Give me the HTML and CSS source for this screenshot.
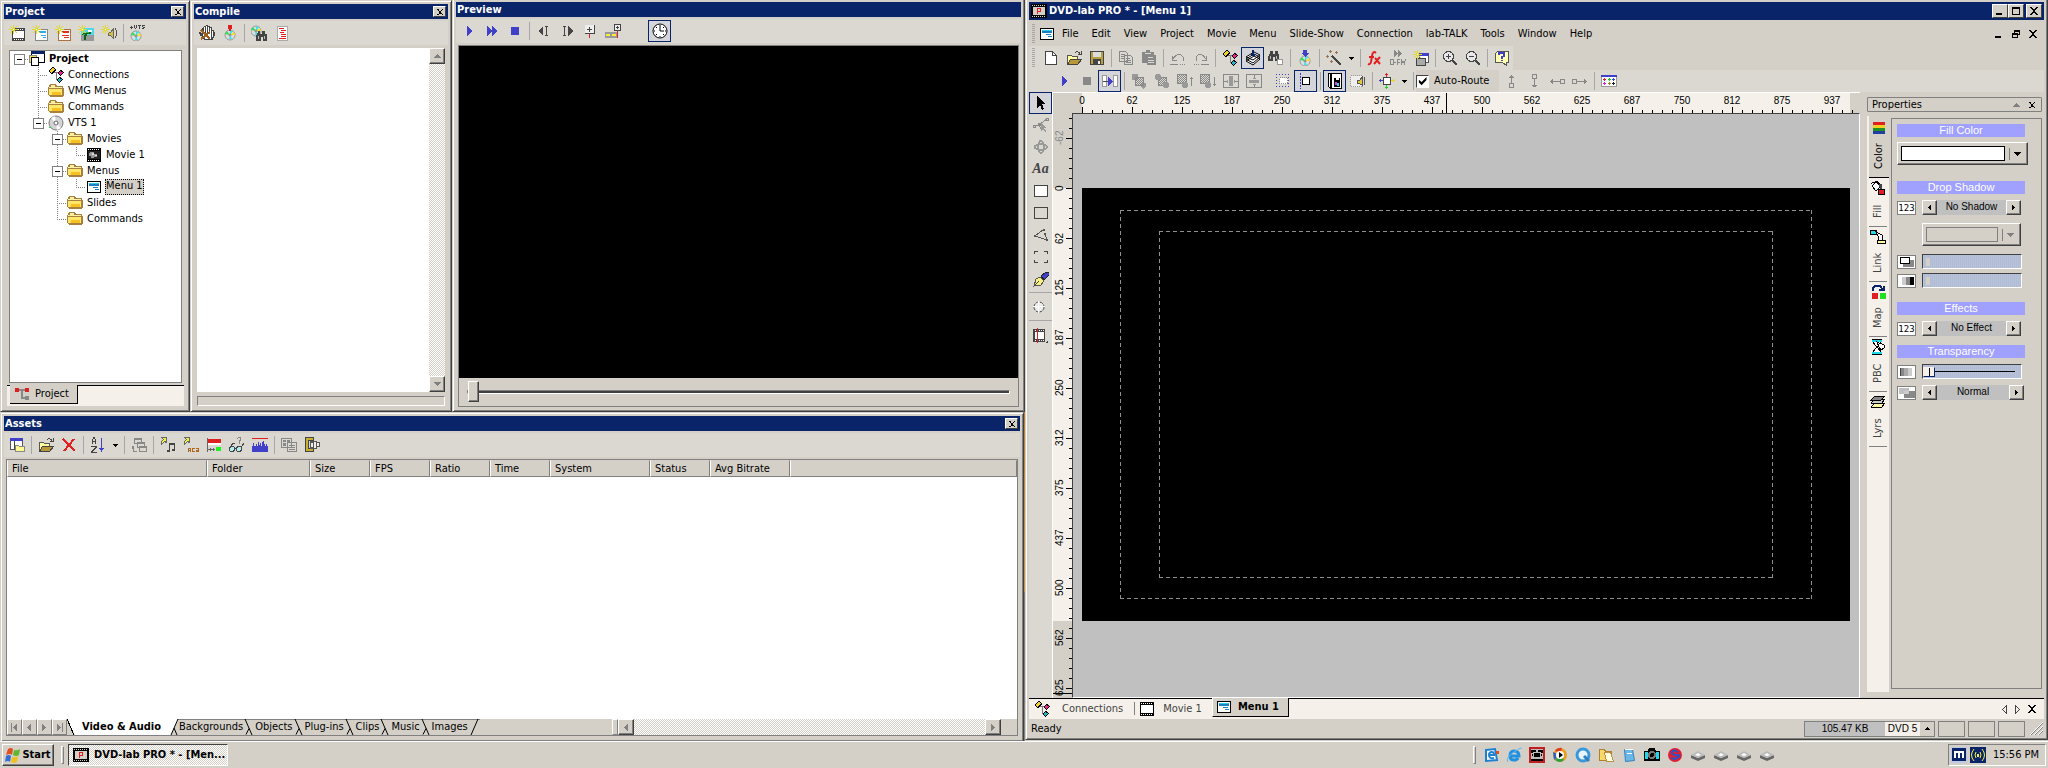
FILE: index.html
```
<!doctype html>
<html lang="en">
  <head>
    <meta charset="utf-8">
    <meta name="viewport" content="width=device-width">
    <title>DVD-lab PRO * - [Menu 1]</title>
    <link rel="stylesheet" href="styles.css">
  </head>
  <body>
    <svg class="sprite" aria-hidden="true">
      <defs>
        <pattern id="dither" width="2" height="2" patternUnits="userSpaceOnUse"><path fill="#888" d="M0 0h1v1h-1zM1 1h1v1h-1z"/></pattern>
        <symbol id="spark" viewBox="0 0 16 16"><path stroke="#e0d830" fill="none" d="M4.500 0v9M0 4.500h9M1 1l7 7M8 1l-7 7"/><path fill="#fff" d="M4 4h1v1h-1z"/></symbol>
        <symbol id="x" viewBox="0 0 8 8"><path fill="#000" d="M0 0h2v1h1v1h2v-1h1v-1h2v1h-1v1h-1v1h-1v2h1v1h1v1h1v1h-2v-1h-1v-1h-2v1h-1v1h-2v-1h1v-1h1v-1h1v-2h-1v-1h-1v-1h-1z"/></symbol>
        <symbol id="min" viewBox="0 0 8 8"><path d="M0 6h6v2H0z"/></symbol>
        <symbol id="max" viewBox="0 0 9 9"><path fill-rule="evenodd" d="M0 0h9v9H0zM1 2v6h7V2z"/></symbol>
        <symbol id="restore" viewBox="0 0 8 8"><path fill-rule="evenodd" d="M2 0h6v5H6v3H0V3h2zM3 2v1h3v1h1V2zM1 5v2h4V5z"/></symbol>
        <symbol id="down" viewBox="0 0 7 4"><path d="M0 0h7L3.500 4z"/></symbol>
        <symbol id="left" viewBox="0 0 4 7"><path d="M4 0v7L0 3.500z"/></symbol>
        <symbol id="right" viewBox="0 0 4 7"><path d="M0 0v7L4 3.500z"/></symbol>
        <symbol id="film" viewBox="0 0 16 16"><path d="M1 1h14v14H1z"/><path fill="#fff" d="M2 4h12v8H2zM2 2h1v1H2zM4 2h1v1H4zM6 2h1v1H6zM8 2h1v1H8zM10 2h1v1h-1zM12 2h1v1h-1zM2 13h1v1H2zM4 13h1v1H4zM6 13h1v1H6zM8 13h1v1H8zM10 13h1v1h-1zM12 13h1v1h-1z"/></symbol>
        <symbol id="movie" viewBox="0 0 16 16"><use href="#film"/><path fill="#222" d="M2 4h12v8H2z"/><path fill="#999" d="M4 5h4v2h3v3H8v1H5V9H3V6h1z"/><path fill="#ddd" d="M6 6h2v2H6zM9 8h2v1H9z"/></symbol>
        <symbol id="menu" viewBox="0 0 16 16"><path d="M1 2h14v12H1z"/><path fill="#fff" d="M2 3h12v10H2z"/><path fill="#2cc8e8" d="M3 4h10v1H3z"/><path fill="#1c80c0" d="M3 5h10v2H3zM7 8h5v1H7zM9 10h4v1H9z"/></symbol>
        <symbol id="newmovie" viewBox="0 0 16 16"><path fill="#444" d="M3 3h13v13H3z"/><path fill="#fff" d="M4 6h11v7H4zM5 4h1v1H5zM7 4h1v1H7zM9 4h1v1H9zM11 4h1v1h-1zM13 4h1v1h-1zM5 14h1v1H5zM7 14h1v1H7zM9 14h1v1H9zM11 14h1v1h-1zM13 14h1v1h-1z"/><use href="#spark"/></symbol>
        <symbol id="newmenu" viewBox="0 0 16 16"><path fill="#fff" stroke="#888" d="M3.500 4.500h12v11h-12z"/><path fill="#30b0e0" d="M7 6h7v2H7zM9 10h5v1H9zM11 12h3v1h-3z"/><use href="#spark"/></symbol>
        <symbol id="newred" viewBox="0 0 16 16"><path fill="#fff" stroke="#b07040" d="M3.500 4.500h12v11h-12z"/><path fill="#e03020" d="M7 6h7v2H7zM7 10h7v1H7zM9 12h5v1H9z"/><use href="#spark"/></symbol>
        <symbol id="newslide" viewBox="0 0 16 16"><path fill="#50d8f0" d="M3 3h13v7H3z"/><path fill="#999" d="M3 10h13v6H3z"/><path fill="#fff" d="M10 5h4v2h-4z"/><path fill="#106020" d="M7 7h6v2H9v2H8v4H6v-5H4V8h3z"/><path fill="#30c040" d="M8 7h3v1H8zM5 9h2v1H5z"/><use href="#spark"/></symbol>
        <symbol id="newsound" viewBox="0 0 16 16"><path fill="#d8c040" stroke="#666" d="M7.500 7.500h2l3-4v10l-3-3h-2z"/><path fill="none" stroke="#555" d="M14 3q3 5 0 10"/><use href="#spark"/></symbol>
        <symbol id="disc" viewBox="0 0 16 16"><g shape-rendering="auto"><circle cx="8" cy="8" r="7" fill="#d4d4d8" stroke="#777"/><path fill="#fff" d="M8 8L3 3l4-2zM8 8l5 5-4 2z"/><circle cx="8" cy="8" r="2" fill="#fff" stroke="#666"/></g><path fill="#20e040" d="M1 12h2v1H1z"/></symbol>
        <symbol id="cd" viewBox="0 0 16 16"><g shape-rendering="auto"><circle cx="8" cy="10" r="5" fill="#ddd" stroke="#999"/><path fill="#30e050" d="M8 10l-5-1 2-3z"/><path fill="#30e8f0" d="M8 10V5l3 1zM8 10l2 4h-3z"/><path fill="#ffe020" d="M8 10l4-3 1 3z"/><circle cx="8" cy="10" r="1" fill="#fff" stroke="#777"/></g></symbol>
        <symbol id="vts" viewBox="0 0 16 16"><use href="#cd" x="-2" y="1"/><path fill="#444" d="M0 2h3v1H0zM1 1h1v3H1zM4 0h1v3H4zM6 0h1v3H6zM5 3h1v1H5zM8 0h3v1H8zM9 1h1v3H9zM12 0h3v1h-3zM12 1h1v1h-1zM13 2h2v1h-2zM12 3h2v1h-2z"/></symbol>
        <symbol id="conn" viewBox="0 0 16 16"><path fill="none" stroke="#777" d="M5 5.500h6M8.500 6v6h3"/><path fill="#000" d="M4 0h2v1h1v1h1v2H7v1H6v1H5v1H3V6H2V5H1V3h1V2h1V1h1zM12 3h2v1h1v1h1v1h-1v1h-1v1h-1v1h-1V8h-1V7h-1V5h1V4h1zM11 10h2v1h1v1h1v1h-1v1h-1v1h-1v1h-1v-1h-1v-1H9v-2h1v-1h1z"/><path fill="#f0d030" d="M4 1h2v1h1v1H6v1H5v1H4v1H3V5H2V3h1V2h1z"/><path fill="#f02090" d="M12 4h1v1h2v1h-1v1h-1v1h-1V7h-1V5h1z"/><path fill="#20b8c8" d="M11 11h1v1h2v1h-1v1h-1v1h-1v-1h-1v-2h1z"/></symbol>
        <symbol id="folder" viewBox="0 0 16 16"><path fill="#a88040" d="M2 1h6v1h1v1h6v2h1v8h-1v1H2v-1H1v-1H0V4h1V2h1z"/><path fill="#fff0a0" d="M3 2h4v2h7v1H1V4h2z"/><path fill="#fce868" d="M1 6h13v6H1z"/><path fill="#f8c020" d="M4 9h9v3H4z"/></symbol>
        <symbol id="project" viewBox="0 0 16 16"><path fill="#fff" stroke="#000" d="M2.500 1.500h13v10h-13z"/><path fill="#0a246a" d="M2 0h14v3H2z"/><path fill="#f0e060" stroke="#888" d="M.5 4.500h7v7h-7z"/><path fill="#fff" stroke="#000" d="M2.500 6.500h7v8h-7z"/></symbol>
        <symbol id="hand" viewBox="0 0 16 16"><path fill="#444" d="M5 1h2V0h2v1h2v1h2v3h2v2h1v4h-1v2h-1v2H5v-1H4v-1H3v-2H1V9H0V7h2v1h1V3h1V2h1z"/><path fill="#fff" d="M5 2h1v6H5zM7 1h1v7H7zM9 2h1v6H9zM11 3h1v6h-1zM13 6h1v6h-1zM4 9h8v5H6v-1H4z"/><path stroke="#a06020" stroke-width="2" d="M2 5l9 9M11 7l-9 7"/></symbol>
        <symbol id="burn" viewBox="0 0 16 16"><use href="#cd"/><path fill="#e02020" d="M6 0h4v4H9v2H7V4H6z"/></symbol>
        <symbol id="binoc" viewBox="0 0 16 16"><path fill="#444" d="M1 4h1V1h3v3h2V1h3v3h1v7H7V7H5v4H0V6h1z"/><path fill="#bbb" d="M2 6h1v3H2zM8 6h1v3H8z"/><circle cx="12" cy="12" r="3" fill="#fff" stroke="#999"/></symbol>
        <symbol id="cdbinoc" viewBox="0 0 16 16"><use href="#cd" x="-3" y="-4"/><path fill="#444" d="M6 8h1V6h2v3h2V6h3v3h2v7h-4v-4h-2v4H5v-6h1z"/><path fill="#bbb" d="M7 11h1v3H7zM13 11h1v3h-1z"/></symbol>
        <symbol id="log" viewBox="0 0 16 16"><path fill="#fff" stroke="#aaa" d="M3.500 1.500h10v14h-10z"/><path fill="#e02020" d="M5 3h5v1H5zM7 5h5v1H7zM6 7h4v1H6zM7 9h5v1H7zM7 11h5v1H7zM5 13h7v1H5z"/></symbol>
        <symbol id="play" viewBox="0 0 16 16"><path fill="#4040c8" d="M6 3v10l5-5z"/></symbol>
        <symbol id="ff" viewBox="0 0 16 16"><path fill="#4040c8" d="M3 3v10l5-5zM8 3v10l5-5z"/></symbol>
        <symbol id="stop" viewBox="0 0 16 16"><path d="M4 4h8v8H4z"/></symbol>
        <symbol id="prev" viewBox="0 0 16 16"><path fill="#444" d="M7 3v10L2 8zM9 3h3v1h-1v8h1v1H9v-1h1V4H9z"/></symbol>
        <symbol id="next" viewBox="0 0 16 16"><path fill="#444" d="M9 3v10l5-5zM4 3h3v1H6v8h1v1H4v-1h1V4H4z"/></symbol>
        <symbol id="mark" viewBox="0 0 16 16"><path fill="#eee" d="M3 2h10v9H3z"/><path fill="none" stroke="#444" d="M12.500 2v8.500H3M7.500 4v5M5 6.500h5"/><path fill="#e02020" d="M7 11h1v4H7z"/></symbol>
        <symbol id="markfilm" viewBox="0 0 16 16"><path fill="#999" d="M0 9h12v6H0z"/><path fill="#f8f040" d="M1 11h4v2H1zM7 11h4v2H7z"/><path fill="#eee" stroke="#444" d="M9.500 1.500h6v6h-6z"/><path fill="#444" d="M11 4h3v1h-3zM12 3h1v3h-1z"/><path fill="#e02020" d="M12 8h1v7h-1z"/></symbol>
        <symbol id="clock" viewBox="0 0 16 16"><g shape-rendering="auto"><circle cx="8" cy="8" r="7" fill="#fff" stroke="#000"/><path fill="none" stroke="#000" d="M8 2v6h4M8 13v1M2 8h1M13 8h1M4 4l1 1M12 4l-1 1M4 12l1-1M12 12l-1-1"/></g></symbol>
        <symbol id="assetnew" viewBox="0 0 16 16"><path fill="#fff" stroke="#555" d="M1.500 1.500h12v11h-12z"/><path fill="#4040c8" d="M1 1h13v3H1z"/><path fill="#444" d="M5 4h1v9H5z"/><path fill="#fffa90" stroke="#888" d="M6.500 8.500h3l1 1h5v5h-9z"/></symbol>
        <symbol id="open" viewBox="0 0 16 16"><path fill="#ffffa0" stroke="#555" d="M1.500 14V5.500h4l1 1h5v3"/><path fill="#b89838" stroke="#444" d="M1.500 14.500l3-5h11l-4 5z"/><path fill="none" stroke="#444" d="M9 3q3-3 5 1M12 4h3V1"/></symbol>
        <symbol id="delete" viewBox="0 0 16 16"><path fill="none" stroke="#e02020" stroke-width="2" d="M2 2l12 12M13 2L3 14"/></symbol>
        <symbol id="sort" viewBox="0 0 16 16"><path fill="#444" d="M3 0h2v2h1v5H5V5H3v2H2V2h1zM3 2v2h2V2zM1 9h6v2H6v1H5v1H4v1H3v1h4v1H1v-2h1v-1h1v-1h1v-1h1v-1H1z" fill-rule="evenodd"/><path fill="#4040c8" d="M11 1h1v10h2l-2.500 4L9 11h2z"/></symbol>
        <symbol id="copies" viewBox="0 0 16 16"><path fill="#dbd8d1" stroke="#888" d="M3.500 1.500h7v5h-7zM6.500 5.500h7v5h-7zM8.500 9.500h7v5h-7z"/><path fill="#888" d="M3 1h8v2H3zM6 5h8v2H6zM8 9h8v2H8zM1 9h2v5h3v1H2v-3H1z"/></symbol>
        <symbol id="note" viewBox="0 0 16 16"><path fill="#f8f040" stroke="#666" d="M1.500.5h5v5l-2-1-3 3v-3l2-2z"/><path fill="#444" d="M9 6h6v8h-3v-2h2V8h-4v7H7v-2h2z"/></symbol>
        <symbol id="ac3" viewBox="0 0 16 16"><path fill="#f8f040" stroke="#666" d="M1.500.5h5v5l-2-1-3 3v-3l2-2z"/><path fill="none" stroke="#b06820" d="M5.500 15v-4h2v4M5 13.500h3M12 11.500h-2.500v3H12M13 11.500h2.500v3H13M13 13h2"/></symbol>
        <symbol id="bars" viewBox="0 0 16 16"><path fill="#e02020" d="M2 2h13v4H2z"/><path fill="#fff" d="M2 6h13v2H2z"/><path fill="#20f020" d="M10 10h5v4h-5z"/><path fill="none" stroke="#666" d="M2 12.500h7M4.500 11v3M7.500 11v3M1.500 1v14"/></symbol>
        <symbol id="glasses" viewBox="0 0 16 16"><g fill="#b0f0f0" stroke="#444"><circle cx="3" cy="12" r="2.500"/><circle cx="10" cy="12" r="2.500"/></g><path fill="none" stroke="#444" d="M1 11l3-5h2M12 11l3-5M5 11h3"/><path fill="none" stroke="#888" d="M8 2q3-3 4 0l-2 3v2"/></symbol>
        <symbol id="histo" viewBox="0 0 16 16"><path fill="#e02020" d="M0 1h16v1H0z"/><path fill="#4040c8" d="M0 15v-6h1V6h1v3h2V7h1v2h1V5h1v3h1V6h1v3h1V5h1V4h1v3h1v2h1V7h1v2h1v6z"/></symbol>
        <symbol id="grids" viewBox="0 0 16 16"><path fill="#dbd8d1" stroke="#888" d="M.5 1.500h10v9H.5zM6.500 5.500h9v9h-9z"/><path fill="#888" d="M2 3h3v2H2zM6 3h3v2H6zM2 6h3v3H2zM8 8h6v1H8zM8 10h6v1H8zM8 12h6v1H8z"/></symbol>
        <symbol id="clamp" viewBox="0 0 16 16"><path fill="#c8b030" stroke="#444" d="M1.500.5h8v3h-5v8h5v3h-8z"/><path fill="#555" d="M6 4h7v1h3v5h-3v2H6z"/><path fill="#eee" d="M7 6h2v4H7zM10 5h2v6h-2zM13 6h2v3h-2z"/></symbol>
        <symbol id="page" viewBox="0 0 16 16"><path fill="#fff" stroke="#444" d="M2.500 1.500h7l4 4v9h-11z"/><path fill="none" stroke="#444" d="M9.500 1v4.500H14"/></symbol>
        <symbol id="save" viewBox="0 0 16 16"><path fill="#b8a040" stroke="#444" d="M1.500 1.500h13v13h-13z"/><path fill="#ddd" d="M4 2h8v5H4z"/><path fill="#444" d="M4 9h8v6H4z"/><path fill="#eee" d="M9 11h2v3H9z"/></symbol>
        <symbol id="copy" viewBox="0 0 16 16"><path fill="#dbd8d1" stroke="#888" d="M1.500 1.500h6l2 2v8h-8zM6.500 5.500h6l2 2v7h-8z"/><path fill="#888" d="M3 4h4v1H3zM3 6h3v1H3zM3 8h3v1H3zM8 8h4v1H8zM8 10h5v1H8zM8 12h5v1H8z"/></symbol>
        <symbol id="paste" viewBox="0 0 16 16"><path fill="#888" d="M1 2h4V0h4v2h4v3h2v10H6v-2H1z"/><path fill="#dbd8d1" d="M4 3h6v1H4zM7 7h5v1H7zM7 10h6v1H7zM7 12h6v1H7z"/></symbol>
        <symbol id="undo" viewBox="0 0 16 16"><path fill="none" stroke="#888" d="M3 10l-1-4M2 10h5M3 9q5-8 10-2v4M0 14.500h8M10 14.500h1M12 14.500h1M14 14.500h1"/></symbol>
        <symbol id="redo" viewBox="0 0 16 16"><path fill="none" stroke="#888" d="M13 10l1-4M14 10H9M13 9q-5-8-10-2v4M16 14.500H8M6 14.500H5M4 14.500H3M2 14.500H1"/></symbol>
        <symbol id="stack" viewBox="0 0 16 16"><path fill="#fff" stroke="#000" shape-rendering="auto" d="M1 11l8-5 6 3-7 6zM1 9l8-5 6 3-7 6zM1 7l8-5 6 3-7 5z"/><path fill="#0a246a" d="M7 0h2v4h2L8 7 5 4h2z"/></symbol>
        <symbol id="cddown" viewBox="0 0 16 16"><use href="#cd" y="1"/><path fill="#4040c8" d="M6 0h4v3h2L8 7 4 3h2z"/></symbol>
        <symbol id="wand" viewBox="0 0 16 16"><path stroke="#444" stroke-width="2" d="M6 6l9 9"/><path stroke="#a07050" d="M4.500 0v3M3 1.500h3M1.500 5v3M0 6.500h3M10.500 1v3M9 2.500h3M5.500 10v3M4 11.500h3"/></symbol>
        <symbol id="fx" viewBox="0 0 16 16"><path fill="none" stroke="#e02020" stroke-width="2" shape-rendering="auto" d="M9 3q-3-3-4 3L4 12q-1 3-3 2M2 7h5M8 8l5 6M13 7l-6 7"/></symbol>
        <symbol id="dfx" viewBox="0 0 16 16"><path fill="#888" d="M4 0v7l4-3.500zM8 0v7l4-3.500z"/><path fill="none" stroke="#888" d="M.5 9.500H3v5H.5zM4 12.500h2M7.500 15V9.500H10M7 12.500h3M11.500 9v2l3 2v2M15 9v2l-4 2v2"/></symbol>
        <symbol id="newpanel" viewBox="0 0 16 16"><path fill="#fff" stroke="#555" d="M6.500 4.500h9v8h-9z"/><path fill="#4040c8" d="M6 3h10v3H6z"/><path fill="#aaa" stroke="#444" d="M3.500 8.500h9v7h-9z"/><use href="#spark"/></symbol>
        <symbol id="zoomin" viewBox="0 0 16 16"><circle cx="6.500" cy="6.500" r="5" fill="#e8e8e8" stroke="#444"/><path fill="none" stroke="#444" d="M4 6.500h5M6.500 4v5"/><path stroke="#444" stroke-width="2" d="M10 10l5 5"/></symbol>
        <symbol id="zoomout" viewBox="0 0 16 16"><circle cx="6.500" cy="6.500" r="5" fill="#e8e8e8" stroke="#444"/><path fill="none" stroke="#444" d="M4 6.500h5"/><path stroke="#444" stroke-width="2" d="M10 10l5 5"/></symbol>
        <symbol id="help" viewBox="0 0 16 16"><path fill="#ffffb0" stroke="#555" d="M1.500 3.500l2-2h11v11h-2v3l-4-3h-7z"/><path fill="none" stroke="#4040c8" stroke-width="2" d="M5 5V3h5v3L8 7v2M8 10v1"/></symbol>
        <symbol id="routein" viewBox="0 0 16 16"><path fill="#fff" stroke="#999" d="M.5 2.500h4v11h-4zM11.500 2.500h4v11h-4z"/><path fill="none" stroke="#444" d="M1 8.500h6"/><path fill="#4040c8" d="M6 4v9l5-4.500z"/></symbol>
        <symbol id="ord1" viewBox="0 0 16 16"><path fill="#999" d="M1 1h6v6H1zM10 10h5v4l-3 2-2-2z"/><path fill="url(#dither)" stroke="#888" d="M4.500 4.500h8v8h-8z"/></symbol>
        <symbol id="ord2" viewBox="0 0 16 16"><path fill="url(#dither)" stroke="#888" d="M4.500 4.500h8v8h-8z"/><circle cx="4" cy="4" r="3" fill="#999"/><circle cx="12" cy="12" r="3" fill="#999"/></symbol>
        <symbol id="ordup" viewBox="0 0 16 16"><path fill="url(#dither)" stroke="#888" d="M.5 1.500h9v9h-9z"/><circle cx="8" cy="12" r="3" fill="#999"/><path fill="#888" d="M14 4h1v9h-1zM13 5h3v1h-3z"/></symbol>
        <symbol id="orddown" viewBox="0 0 16 16"><path fill="url(#dither)" stroke="#888" d="M.5 1.500h9v9h-9z"/><circle cx="8" cy="12" r="3" fill="#999"/><path fill="#888" d="M14 4h1v9h-1zM13 11h3v1h-3z"/></symbol>
        <symbol id="cenh" viewBox="0 0 16 16"><path fill="none" stroke="#888" d="M.5 1.500h15v13H.5zM1 8.500h4M11 8.500h4"/><path fill="#999" d="M6 3h4v10H6zM4 7h1v3H4zM11 7h1v3h-1z"/></symbol>
        <symbol id="cenv" viewBox="0 0 16 16"><path fill="none" stroke="#888" d="M.5 1.500h15v13H.5zM8.500 2v4M8.500 11v4"/><path fill="#999" d="M3 7h10v3H3zM7 5h3v1H7zM7 11h3v1H7z"/></symbol>
        <symbol id="snapgrid" viewBox="0 0 16 16"><g fill="none" stroke="#4040c8" stroke-dasharray="1 2"><path d="M1 1.500h15M1 4.500h3M1 7.500h3M1 10.500h3M1 13.500h15M13 4.500h3M13 7.500h3M13 10.500h3"/></g><path fill="#fff" stroke="#888" stroke-dasharray="1 1" d="M4.500 4.500h8v6h-8z"/></symbol>
        <symbol id="snapguide" viewBox="0 0 16 16"><path stroke="#4040c8" stroke-dasharray="2 1" d="M2.500 0v16"/><path d="M4 4h8v8H4z"/><path fill="#fff" d="M5 5h6v6H5z"/></symbol>
        <symbol id="safe" viewBox="0 0 16 16"><path d="M1 0h14v16H3l-2-2z"/><path fill="#fff" d="M2 1h1v13H2zM5 1h9v14H5z"/><path d="M7 5h6v9H7z"/><path fill="#fff" d="M9 4h3v3H9z"/><path fill="#e040e0" d="M8 9h2v3H8z"/><path fill="#20d8e8" d="M10 10h2v3h-2z"/></symbol>
        <symbol id="filmsound" viewBox="0 0 16 16"><path fill="#eee" stroke="#999" stroke-dasharray="1 1" d="M.5 2.500h12v11H.5z"/><path fill="#e0c840" stroke="#555" d="M7.500 7.500h2l3-4v9l-3-2h-2z"/><path fill="none" stroke="#555" d="M14 4q2 4 0 8"/></symbol>
        <symbol id="cross" viewBox="0 0 16 16"><path fill="#4040c8" d="M0 7h4v1H0zM1 6h1v3H1z"/><path fill="#e02020" d="M7 0h1v4H7zM6 1h3v1H6z"/><path fill="#e8d820" d="M12 7h4v1h-4zM14 6h1v3h-1z"/><path fill="#20d020" d="M7 12h1v4H7zM6 14h3v1H6z"/><path fill="#fff" stroke="#444" d="M4.500 4.500h7v7h-7z"/></symbol>
        <symbol id="aup" viewBox="0 0 16 16"><path fill="none" stroke="#888" d="M8.500 2v8M6 10.500h4v4H6.500v-4M6 4.500h5M7 3.500h3"/></symbol>
        <symbol id="adown" viewBox="0 0 16 16"><path fill="none" stroke="#888" d="M8.500 6v8M6 1.500h4v4H6.500v-4M6 12.500h5M7 13.500h3"/></symbol>
        <symbol id="aleft" viewBox="0 0 16 16"><path fill="none" stroke="#888" d="M1 8.500h10M11.500 6.500h4v4h-4zM3.500 6v5M2.500 7v3"/></symbol>
        <symbol id="aright" viewBox="0 0 16 16"><path fill="none" stroke="#888" d="M5 8.500h10M.5 6.500h4v4h-4zM12.500 6v5M13.500 7v3"/></symbol>
        <symbol id="palette" viewBox="0 0 16 16"><path fill="#fff" stroke="#999" d="M.5 2.500h15v11H.5z"/><path fill="#4040c8" d="M0 2h16v2H0z"/><path fill="#e02020" d="M2 6h3v1H2zM3 5h1v3H3z"/><path fill="#20c020" d="M7 6h3v1H7zM8 5h1v3H8z"/><path fill="#4040c8" d="M11 6h3v1h-3zM12 5h1v3h-1z"/><path fill="#e020e0" d="M2 10h3v1H2zM3 9h1v3H3z"/><path fill="#a08020" d="M7 10h3v1H7zM8 9h1v3H8z"/><path fill="#222" d="M11 10h3v1h-3zM12 9h1v3h-1z"/></symbol>
        <symbol id="cursor" viewBox="0 0 16 16"><path d="M4 1v12l3-3 2 5 2-1-2-5h4z"/></symbol>
        <symbol id="nodes" viewBox="0 0 16 16"><path fill="none" stroke="#888" d="M1 9l5-1 8-6M6 8l3 6M.5 8.500h2v2h-2zM5.500 6.500h2v2h-2zM13.500 1.500h2v2h-2z"/><path fill="#999" d="M8 6v8l2-2 2 3 1-1-2-3h3z"/></symbol>
        <symbol id="orbit" viewBox="0 0 16 16"><g fill="none" stroke="#999" stroke-width="2"><ellipse cx="8" cy="8" rx="6" ry="3"/><ellipse cx="8" cy="8" rx="3" ry="6"/></g></symbol>
        <symbol id="rectf" viewBox="0 0 16 16"><path fill="#fff" stroke="#444" d="M1.500 2.500h13v11h-13z"/></symbol>
        <symbol id="rect" viewBox="0 0 16 16"><path fill="none" stroke="#444" d="M1.500 2.500h13v11h-13z"/></symbol>
        <symbol id="poly" viewBox="0 0 16 16"><path fill="none" stroke="#555" d="M11 2L2 9l12 4-2-6"/><path fill="#555" d="M1 8h2v2H1zM10 2h2v2h-2zM13 12h2v2h-2zM11 6h2v2h-2z"/></symbol>
        <symbol id="frame" viewBox="0 0 16 16"><path fill="none" stroke="#444" d="M1.500 5V2.500H5M11 2.500h3.500V5M1.500 11v2.500H5M11 13.500h3.500V11"/></symbol>
        <symbol id="pen" viewBox="0 0 16 16"><path fill="#4040c8" stroke="#222" d="M8 5l5-4h3v3l-5 5z"/><path fill="#f8f080" stroke="#555" d="M1 15l2-7 4-2 4 4-3 4z"/><path stroke="#444" d="M1 15l5-5"/></symbol>
        <symbol id="dotcircle" viewBox="0 0 16 16"><circle cx="6" cy="8" r="5" fill="#eee" stroke="#444" stroke-dasharray="3 1" shape-rendering="auto"/><path stroke="#fff" d="M5.500 2v12M0 7.500h12"/></symbol>
        <symbol id="filmcut" viewBox="0 0 16 16"><path fill="#444" d="M0 2h12v13H0z"/><path fill="#fff" d="M2 5h9v7H2zM2 3h1v1H2zM6 3h1v1H6zM8 3h1v1H8zM10 3h1v1h-1zM2 13h1v1H2zM6 13h1v1H6zM8 13h1v1H8zM10 13h1v1h-1z"/><path fill="#e02020" d="M4 1h1v15H4z"/><path fill="#444" d="M15 13v3h-3z"/></symbol>
        <symbol id="rainbow" viewBox="0 0 16 16"><path fill="#e02020" d="M2 2h12v3H2z"/><path fill="#f0d020" d="M2 5h12v3H2z"/><path fill="#209020" d="M2 8h12v3H2z"/><path fill="#2040a0" d="M2 11h12v3H2z"/></symbol>
        <symbol id="bucket" viewBox="0 0 16 16"><path fill="#fff" stroke="#000" d="M2 6l5-5 4 5-5 5z"/><path fill="none" stroke="#000" d="M1 4q5-5 9 2"/><path fill="#444" d="M9 4h3v6h-2z"/><path fill="#e02020" stroke="#000" d="M8.500 9.500h6v5h-6z"/></symbol>
        <symbol id="link" viewBox="0 0 16 16"><path fill="#20d8e8" stroke="#000" d="M.5 1.500h6v4h-6z"/><path fill="#fff8a0" stroke="#000" d="M7.500 11.500h8v3h-8z"/><path fill="#fff" stroke="#000" d="M6 3l6 3v5H9L8 7z"/></symbol>
        <symbol id="map" viewBox="0 0 16 16"><path fill="#e02020" d="M2 9h6v6H2z"/><path fill="#20e020" d="M10 9h6v6h-6z"/><path fill="none" stroke="#0a246a" stroke-width="2" d="M3 7V4l2-2h5l3 4M9 6h5V2"/></symbol>
        <symbol id="pbc" viewBox="0 0 16 16"><path fill="#fff" stroke="#000" d="M3.500 2v2L7 8l-3.500 4v2h7v-2L7 8l3.500-4V2z"/><path fill="#20d8e8" d="M2 1h10v2H2zM2 13h10v2H2z"/><path fill="none" stroke="#000" d="M2 .5h10M2 15.500h10"/><path fill="#fff" stroke="#000" d="M7 3l7 3v3l-3 2-2-3z"/></symbol>
        <symbol id="layers" viewBox="0 0 16 16"><path fill="#fff8a0" stroke="#000" d="M1 13l4-4h10l-4 5z"/><path fill="#ccc" stroke="#000" d="M1 9l4-4h10l-4 5z"/><path fill="#888" stroke="#000" d="M1 6l4-4h10l-4 4z"/></symbol>
        <symbol id="shadow" viewBox="0 0 16 12"><path fill="#888" d="M4 4h11v7H4z"/><path fill="#fff" stroke="#000" d="M1.500 1.500h9v6h-9z"/></symbol>
        <symbol id="grad" viewBox="0 0 16 12"><path fill="#ccc" d="M3 2h4v8H3z"/><path fill="#888" d="M7 2h4v8H7z"/><path d="M11 2h4v8h-4z"/></symbol>
        <symbol id="gradl" viewBox="0 0 16 12"><path fill="#444" d="M1 2h1v8H1z"/><path fill="#888" d="M2 2h3v8H2z"/><path fill="#aaa" d="M5 2h4v8H5z"/><path fill="#ccc" d="M9 2h4v8H9z"/></symbol>
        <symbol id="blend" viewBox="0 0 16 12"><path fill="#c0c0c0" d="M0 1h10v6H0z"/><path fill="#888" d="M5 4h11v7H5z"/><path fill="#ccc" d="M5 4h5v3H5z"/></symbol>
        <symbol id="tree" viewBox="0 0 16 16"><path fill="#e02020" d="M1 2h4v4H1zM11 2h4v4h-4z"/><path fill="#888" d="M11 10h4v4h-4z"/><path fill="none" stroke="#888" stroke-width="2" d="M5 4h6M8 4v8h3"/></symbol>
        <symbol id="dvdlab" viewBox="0 0 16 16"><path d="M0 1h16v14H0z"/><path fill="#d4d0c8" d="M2 4h12v8H2zM1 2h1v1H1zM3 2h1v1H3zM5 2h1v1H5zM7 2h1v1H7zM9 2h1v1H9zM11 2h1v1h-1zM13 2h1v1h-1zM1 13h1v1H1zM3 13h1v1H3zM5 13h1v1H5zM7 13h1v1H7zM9 13h1v1H9zM11 13h1v1h-1zM13 13h1v1h-1z"/><path fill="#e02020" d="M6 5h4v4H7v2H6zM7 6v2h2V6z" fill-rule="evenodd"/></symbol>
        <symbol id="slant" viewBox="0 0 12 16"><path fill="none" stroke="#000" shape-rendering="auto" d="M2 0l7 16M3 15.500l3-6"/></symbol>
        <symbol id="flag" viewBox="0 0 16 16"><g shape-rendering="auto"><path fill="#e05020" d="M3 2q3-2 5 0L7 8q-2-2-6 0z"/><path fill="#60b830" d="M9 3q3 1 6-1l-1 6q-3 2-6 0z"/><path fill="#3070d8" d="M1 9q3-2 5 0l-1 6q-2-2-5 0z"/><path fill="#f0c020" d="M7 10q3 1 6-1l-1 6q-3 2-6 0z"/></g></symbol>
        <symbol id="outlook" viewBox="0 0 16 16"><g shape-rendering="auto"><path fill="#fff" stroke="#2080d0" stroke-width="2" d="M3 3l9-1 2 11-11 1z"/><path fill="none" stroke="#2080d0" stroke-width="2" d="M6 8h5q0-3-2-3-3 0-3 3 0 4 5 3"/></g><path fill="#e05020" d="M13 4h3v3h-3z"/></symbol>
        <symbol id="ie" viewBox="0 0 16 16"><g shape-rendering="auto"><path fill="none" stroke="#2090e0" stroke-width="3" d="M4 9h9q0-5-5-5-4 0-4 5 0 4 4 4 3 0 4-2"/><path fill="none" stroke="#60b8f0" d="M2 15q-3-4 6-10t7-3"/></g></symbol>
        <symbol id="eye" viewBox="0 0 16 16"><path fill="#c02020" d="M0 0h16v16H0z"/><path fill="#bbb" d="M2 2h12v12H2z"/><path d="M2 3h5v2H4v1H2zM9 3h5v3h-2V5H9zM5 6h6v4H5zM3 7h1v2H3zM12 7h1v2h-1zM2 12h12v2H2z"/></symbol>
        <symbol id="wmp" viewBox="0 0 16 16"><g shape-rendering="auto"><circle cx="8" cy="8" r="7" fill="#e8a020"/><path fill="#3060c0" d="M8 8L1 5l1 8z"/><path fill="#30a040" d="M8 8l-5 5q5 4 9 0z"/><path fill="#e04020" d="M8 8L3 3q4-3 7-2z"/><circle cx="8" cy="8" r="4" fill="#fff"/><path d="M7 5v6l4-3z"/></g></symbol>
        <symbol id="qt" viewBox="0 0 16 16"><g shape-rendering="auto"><circle cx="8" cy="8" r="6" fill="#e8f4ff" stroke="#3898d8" stroke-width="3"/><path stroke="#3080c0" stroke-width="3" d="M9 9l5 5"/></g></symbol>
        <symbol id="folders" viewBox="0 0 16 16"><path fill="#f8d868" stroke="#b08030" d="M1.500 2.500h5l1 2h6v9h-12z"/><path fill="#fffce0" stroke="#c09040" d="M6.500 5.500h6l3 9h-7z"/></symbol>
        <symbol id="notepad" viewBox="0 0 16 16"><path fill="#68b8e8" stroke="#3880c0" shape-rendering="auto" d="M3.500 2.500h8l2 11-9 1z"/><path stroke="#fff" d="M4 2.500h8M6 6.500h5"/></symbol>
        <symbol id="camera" viewBox="0 0 16 16"><path d="M0 4h4l1-3h6l1 3h4v10H0z"/><path fill="#20d8e8" d="M1 5h3v7H1zM12 5h3v7h-3z"/><circle cx="8" cy="8" r="4" fill="#777"/><circle cx="8" cy="8" r="2" fill="#000"/></symbol>
        <symbol id="ess" viewBox="0 0 16 16"><g shape-rendering="auto"><circle cx="8" cy="8" r="7" fill="#e02030"/><path fill="none" stroke="#3050c8" stroke-width="2" d="M11 5q-5-3-6 0t5 3-2 4l-4-1"/></g></symbol>
        <symbol id="drive" viewBox="0 0 16 16"><g shape-rendering="auto"><path fill="#666" d="M1 8l7 3 7-3v3l-7 3-7-3z"/><path fill="#bbb" d="M1 8l7-4 7 4-7 3z"/><path fill="#fff" d="M5 8l3-2 3 2-3 1z"/></g></symbol>
      </defs>
    </svg>

    <div class="desktop">
      <div class="left">
        <div class="top-row">
          <section class="win project">
            <header class="caption"><h2>Project</h2><button class="close" aria-label="Close"><svg><use href="#x"/></svg></button></header>
            <div class="toolbar">
              <button aria-label="New movie"><svg><use href="#newmovie"/></svg></button>
              <button aria-label="New menu"><svg><use href="#newmenu"/></svg></button>
              <button aria-label="New VMG menu"><svg><use href="#newred"/></svg></button>
              <button aria-label="New slide-show"><svg><use href="#newslide"/></svg></button>
              <button aria-label="New audio"><svg><use href="#newsound"/></svg></button>
              <i class="sep"></i>
              <button aria-label="Add VTS"><svg><use href="#vts"/></svg></button>
            </div>
            <ul class="tree">
              <li><button class="toggle" aria-label="Collapse"></button><svg><use href="#project"/></svg><b>Project</b></li>
              <li><i></i><i class="tee"></i><svg><use href="#conn"/></svg><span>Connections</span></li>
              <li><i></i><i class="tee"></i><svg><use href="#folder"/></svg><span>VMG Menus</span></li>
              <li><i></i><i class="tee"></i><svg><use href="#folder"/></svg><span>Commands</span></li>
              <li><i></i><button class="toggle ell" aria-label="Collapse"></button><svg><use href="#disc"/></svg><span>VTS 1</span></li>
              <li><i></i><i></i><button class="toggle tee" aria-label="Collapse"></button><svg><use href="#folder"/></svg><span>Movies</span></li>
              <li><i></i><i></i><i class="bar"></i><i class="ell"></i><svg><use href="#movie"/></svg><span>Movie 1</span></li>
              <li><i></i><i></i><button class="toggle tee" aria-label="Collapse"></button><svg><use href="#folder"/></svg><span>Menus</span></li>
              <li><i></i><i></i><i class="bar"></i><i class="ell"></i><svg><use href="#menu"/></svg><span class="selected">Menu 1</span></li>
              <li><i></i><i></i><i class="tee"></i><svg><use href="#folder"/></svg><span>Slides</span></li>
              <li><i></i><i></i><i class="ell"></i><svg><use href="#folder"/></svg><span>Commands</span></li>
            </ul>
            <div class="project-tabs"><button><svg><use href="#tree"/></svg>Project</button></div>
          </section>

          <section class="win compile">
            <header class="caption"><h2>Compile</h2><button class="close" aria-label="Close"><svg><use href="#x"/></svg></button></header>
            <div class="toolbar">
              <button aria-label="Abort"><svg><use href="#hand"/></svg></button>
              <button aria-label="Compile"><svg><use href="#burn"/></svg></button>
              <i class="sep"></i>
              <button aria-label="Check disc"><svg><use href="#cdbinoc"/></svg></button>
              <button aria-label="Log"><svg><use href="#log"/></svg></button>
            </div>
            <div class="log">
              <div class="log-text"></div>
              <div class="vscroll"><button class="up" aria-label="Scroll up"><svg><use href="#down"/></svg></button><button aria-label="Scroll down"><svg><use href="#down"/></svg></button></div>
            </div>
            <div class="progress"></div>
          </section>

          <section class="win preview">
            <header class="caption"><h2>Preview</h2></header>
            <div class="toolbar">
              <button aria-label="Play"><svg><use href="#play"/></svg></button>
              <button aria-label="Fast forward"><svg><use href="#ff"/></svg></button>
              <button class="blue" aria-label="Stop"><svg><use href="#stop"/></svg></button>
              <i class="sep"></i>
              <button aria-label="Previous frame"><svg><use href="#prev"/></svg></button>
              <button aria-label="Next frame"><svg><use href="#next"/></svg></button>
              <button aria-label="Add chapter"><svg><use href="#mark"/></svg></button>
              <button aria-label="Add chapter at frame"><svg><use href="#markfilm"/></svg></button>
              <button class="on clock" aria-label="Time"><svg><use href="#clock"/></svg></button>
            </div>
            <div class="player">
              <div class="video"></div>
              <div class="seek"><input type="range" value="0" aria-label="Position"></div>
            </div>
          </section>
        </div>

        <section class="win assets">
          <header class="caption"><h2>Assets</h2><button class="close" aria-label="Close"><svg><use href="#x"/></svg></button></header>
          <div class="toolbar">
            <button aria-label="New bin"><svg><use href="#assetnew"/></svg></button>
            <i class="sep"></i>
            <button aria-label="Import"><svg><use href="#open"/></svg></button>
            <button aria-label="Delete"><svg><use href="#delete"/></svg></button>
            <i class="sep"></i>
            <button aria-label="Sort"><svg><use href="#sort"/></svg></button>
            <button class="drop" aria-label="Sort options"><svg><use href="#down"/></svg></button>
            <i class="sep"></i>
            <button aria-label="Relink"><svg><use href="#copies"/></svg></button>
            <i class="sep"></i>
            <button aria-label="Extract audio"><svg><use href="#note"/></svg></button>
            <button aria-label="Convert AC3"><svg><use href="#ac3"/></svg></button>
            <button aria-label="Mux"><svg><use href="#bars"/></svg></button>
            <button aria-label="Inspect"><svg><use href="#glasses"/></svg></button>
            <button aria-label="Bitrate"><svg><use href="#histo"/></svg></button>
            <i class="sep"></i>
            <button aria-label="Thumbnails"><svg><use href="#grids"/></svg></button>
            <button aria-label="Transcode"><svg><use href="#clamp"/></svg></button>
          </div>
          <div class="files">
            <div class="file-list">
              <table>
                <colgroup><col class="c200"><col class="c103"><col class="c60"><col class="c60"><col class="c60"><col class="c60"><col class="c100"><col class="c60"><col class="c80"><col></colgroup>
                <thead><tr><th>File</th><th>Folder</th><th>Size</th><th>FPS</th><th>Ratio</th><th>Time</th><th>System</th><th>Status</th><th>Avg Bitrate</th><th></th></tr></thead>
              </table>
            </div>
            <div class="sheets">
              <button class="nav" aria-label="First"><svg viewBox="0 0 9 9"><path d="M1 0h1v9H1zM7 0v9L3 4.500z"/></svg></button>
              <button class="nav" aria-label="Previous"><svg viewBox="0 0 9 9"><path d="M6 0v9L2 4.500z"/></svg></button>
              <button class="nav" aria-label="Next"><svg viewBox="0 0 9 9"><path d="M2 0v9l4-4.500z"/></svg></button>
              <button class="nav" aria-label="Last"><svg viewBox="0 0 9 9"><path d="M7 0h1v9H7zM2 0v9l4-4.500z"/></svg></button>
              <button class="sheet active"><svg viewBox="0 0 8 16"><path fill="#d4d0c8" d="M0 0l8 16H0z"/><path stroke="#000" d="M0 0l7 16"/></svg>Video &amp; Audio</button>
              <svg class="slant first" viewBox="0 0 9 16"><path fill="#fff" d="M0 0h8L1 16H0z"/><path fill="none" stroke="#000" d="M8 0L1 16M4 9l3 7"/></svg>
              <button class="sheet">Backgrounds</button><svg class="slant"><use href="#slant"/></svg>
              <button class="sheet">Objects</button><svg class="slant"><use href="#slant"/></svg>
              <button class="sheet">Plug-ins</button><svg class="slant"><use href="#slant"/></svg>
              <button class="sheet">Clips</button><svg class="slant"><use href="#slant"/></svg>
              <button class="sheet">Music</button><svg class="slant"><use href="#slant"/></svg>
              <button class="sheet">Images</button>
              <svg class="slant" viewBox="0 0 12 16"><path fill="none" stroke="#000" d="M10 0L3 16"/></svg>
              <div class="hscroll"><i class="splitter"></i><button aria-label="Scroll left"><svg class="arrow"><use href="#left"/></svg></button><i class="track"></i><button aria-label="Scroll right"><svg class="arrow"><use href="#right"/></svg></button></div>
            </div>
          </div>
        </section>
      </div>

      <main class="win main">
        <header class="caption">
          <svg><use href="#dvdlab"/></svg>
          <h1>DVD-lab PRO * - [Menu 1]</h1>
          <button class="close" aria-label="Minimize"><svg><use href="#min"/></svg></button>
          <button class="close" aria-label="Maximize"><svg><use href="#max"/></svg></button>
          <button class="close last" aria-label="Close"><svg><use href="#x"/></svg></button>
        </header>
        <nav class="menubar">
          <i class="grip"></i>
          <svg><use href="#menu"/></svg>
          <button>File</button><button>Edit</button><button>View</button><button>Project</button><button>Movie</button><button>Menu</button><button>Slide-Show</button><button>Connection</button><button>lab-TALK</button><button>Tools</button><button>Window</button><button>Help</button>
          <span class="mdi">
            <button aria-label="Minimize document"><svg><use href="#min"/></svg></button>
            <button aria-label="Restore document"><svg><use href="#restore"/></svg></button>
            <button aria-label="Close document"><svg><use href="#x"/></svg></button>
          </span>
        </nav>
        <div class="toolbar standard">
          <i class="grip"></i>
          <button aria-label="New"><svg><use href="#page"/></svg></button>
          <button aria-label="Open"><svg><use href="#open"/></svg></button>
          <button aria-label="Save"><svg><use href="#save"/></svg></button>
          <i class="sep"></i>
          <button aria-label="Copy"><svg><use href="#copy"/></svg></button>
          <button aria-label="Paste"><svg><use href="#paste"/></svg></button>
          <i class="sep"></i>
          <button aria-label="Undo"><svg><use href="#undo"/></svg></button>
          <button aria-label="Redo"><svg><use href="#redo"/></svg></button>
          <i class="sep"></i>
          <button aria-label="Connections"><svg><use href="#conn"/></svg></button>
          <button class="on" aria-label="Assets"><svg><use href="#stack"/></svg></button>
          <button aria-label="Preview"><svg><use href="#binoc"/></svg></button>
          <i class="sep"></i>
          <button aria-label="Compile DVD"><svg><use href="#cddown"/></svg></button>
          <i class="sep"></i>
          <button aria-label="Wizard"><svg><use href="#wand"/></svg></button>
          <button class="drop" aria-label="Wizard options"><svg><use href="#down"/></svg></button>
          <i class="sep"></i>
          <button aria-label="Effects"><svg><use href="#fx"/></svg></button>
          <button aria-label="D-FX"><svg><use href="#dfx"/></svg></button>
          <button aria-label="New window"><svg><use href="#newpanel"/></svg></button>
          <i class="sep"></i>
          <button aria-label="Zoom in"><svg><use href="#zoomin"/></svg></button>
          <button aria-label="Zoom out"><svg><use href="#zoomout"/></svg></button>
          <i class="sep"></i>
          <button aria-label="Help"><svg><use href="#help"/></svg></button>
        </div>
        <div class="toolbar objects">
          <button aria-label="Simulate"><svg><use href="#play"/></svg></button>
          <button class="dim" aria-label="Stop"><svg><use href="#stop"/></svg></button>
          <button class="on" aria-label="Route"><svg><use href="#routein"/></svg></button>
          <i class="sep"></i>
          <button aria-label="To front"><svg><use href="#ord1"/></svg></button>
          <button aria-label="To back"><svg><use href="#ord2"/></svg></button>
          <button aria-label="Move up"><svg><use href="#ordup"/></svg></button>
          <button aria-label="Move down"><svg><use href="#orddown"/></svg></button>
          <button aria-label="Center horizontally"><svg><use href="#cenh"/></svg></button>
          <button aria-label="Center vertically"><svg><use href="#cenv"/></svg></button>
          <i class="gap"></i>
          <button aria-label="Snap to grid"><svg><use href="#snapgrid"/></svg></button>
          <button class="on" aria-label="Snap to guides"><svg><use href="#snapguide"/></svg></button>
          <i class="sep"></i>
          <button class="on" aria-label="Safe area"><svg><use href="#safe"/></svg></button>
          <button aria-label="Background audio"><svg><use href="#filmsound"/></svg></button>
          <i class="sep"></i>
          <button aria-label="Links"><svg><use href="#cross"/></svg></button>
          <button class="drop" aria-label="Link options"><svg><use href="#down"/></svg></button>
          <i class="sep"></i>
          <label class="route"><input type="checkbox" checked>Auto-Route</label>
          <button aria-label="Link up"><svg><use href="#aup"/></svg></button>
          <button aria-label="Link down"><svg><use href="#adown"/></svg></button>
          <button aria-label="Link left"><svg><use href="#aleft"/></svg></button>
          <button aria-label="Link right"><svg><use href="#aright"/></svg></button>
          <i class="sep"></i>
          <button aria-label="Color map"><svg><use href="#palette"/></svg></button>
        </div>

        <div class="work">
          <div class="toolbox">
            <button class="on" aria-label="Select"><svg><use href="#cursor"/></svg></button>
            <button aria-label="Edit nodes"><svg><use href="#nodes"/></svg></button>
            <button aria-label="Rotate"><svg><use href="#orbit"/></svg></button>
            <button class="letter" aria-label="Text">Aa</button>
            <button aria-label="Filled rectangle"><svg><use href="#rectf"/></svg></button>
            <button aria-label="Rectangle"><svg><use href="#rect"/></svg></button>
            <button aria-label="Polygon"><svg><use href="#poly"/></svg></button>
            <button aria-label="Hotspot"><svg><use href="#frame"/></svg></button>
            <button aria-label="Pen"><svg><use href="#pen"/></svg></button>
            <hr>
            <button aria-label="Center"><svg><use href="#dotcircle"/></svg></button>
            <hr>
            <button aria-label="Movie frame"><svg><use href="#filmcut"/></svg></button>
          </div>
          <div class="editor">
            <div class="ruler-h">
              <div class="ruler-range"></div>
              <div class="labels"><span>0</span><span>62</span><span>125</span><span>187</span><span>250</span><span>312</span><span>375</span><span>437</span><span>500</span><span>562</span><span>625</span><span>687</span><span>750</span><span>812</span><span>875</span><span>937</span></div>
              <i class="marker"></i>
            </div>
            <div class="ruler-v">
              <div class="ruler-range"></div>
              <div class="labels"><span class="neg">-62</span><span>0</span><span>62</span><span>125</span><span>187</span><span>250</span><span>312</span><span>375</span><span>437</span><span>500</span><span>562</span><span>625</span></div>
              <i class="marker"></i>
            </div>
            <div class="stage">
              <div class="page"><div class="safe action"></div><div class="safe title"></div></div>
            </div>
          </div>
          <aside class="properties">
            <header><h2>Properties</h2><svg class="pin"><use href="#down"/></svg><button aria-label="Close"><svg><use href="#x"/></svg></button></header>
            <div class="prop-body">
              <div class="vtabs">
                <button class="active"><svg><use href="#rainbow"/></svg><span>Color</span></button>
                <button><svg><use href="#bucket"/></svg><span>Fill</span></button>
                <button><svg><use href="#link"/></svg><span>Link</span></button>
                <button><svg><use href="#map"/></svg><span>Map</span></button>
                <button><svg><use href="#pbc"/></svg><span>PBC</span></button>
                <button><svg><use href="#layers"/></svg><span>Lyrs</span></button>
              </div>
              <div class="panel">
                <h3>Fill Color</h3>
                <div class="combo"><select aria-label="Fill Color"></select><svg><use href="#down"/></svg></div>
                <h3 class="shadow-head">Drop Shadow</h3>
                <div class="row"><button class="tile">123</button><div class="spin"><button aria-label="Previous shadow"><svg><use href="#left"/></svg></button><output>No Shadow</output><button aria-label="Next shadow"><svg><use href="#right"/></svg></button></div></div>
                <div class="row shade"><span></span><div class="combo off"><select aria-label="Shadow color" disabled></select><svg><use href="#down"/></svg></div></div>
                <div class="row"><button class="tile" aria-label="Offset"><svg><use href="#shadow"/></svg></button><input type="range" value="0" disabled aria-label="Shadow offset"></div>
                <div class="row tight"><button class="tile" aria-label="Softness"><svg><use href="#grad"/></svg></button><input type="range" value="0" disabled aria-label="Shadow softness"></div>
                <h3 class="effects-head">Effects</h3>
                <div class="row"><button class="tile">123</button><div class="spin"><button aria-label="Previous effect"><svg><use href="#left"/></svg></button><output>No Effect</output><button aria-label="Next effect"><svg><use href="#right"/></svg></button></div></div>
                <h3 class="alpha-head">Transparency</h3>
                <div class="row"><button class="tile" aria-label="Transparency"><svg><use href="#gradl"/></svg></button><input type="range" value="0" aria-label="Transparency amount"></div>
                <div class="row"><button class="tile" aria-label="Blend"><svg><use href="#blend"/></svg></button><div class="spin wide"><button aria-label="Previous blend"><svg><use href="#left"/></svg></button><output>Normal</output><button aria-label="Next blend"><svg><use href="#right"/></svg></button></div></div>
              </div>
            </div>
          </aside>
        </div>

        <div class="doc-tabs">
          <button><svg><use href="#conn"/></svg>Connections</button>
          <button class="divided"><svg><use href="#film"/></svg>Movie 1</button>
          <button class="active"><svg><use href="#menu"/></svg>Menu 1</button>
          <span class="doc-nav">
            <button aria-label="Scroll tabs left"><svg viewBox="0 0 5 9"><path fill="none" stroke="#444" d="M4.500 .5v8l-4-4z"/></svg></button>
            <button aria-label="Scroll tabs right"><svg viewBox="0 0 5 9"><path fill="none" stroke="#444" d="M.5 .5v8l4-4z"/></svg></button>
            <button aria-label="Close tab"><svg class="cross"><use href="#x"/></svg></button>
          </span>
        </div>
        <footer class="status">
          <span class="ready">Ready</span>
          <div class="capacity"><span class="size">105.47 KB</span><span class="media">DVD 5</span><button aria-label="Disc type"><svg viewBox="0 0 5 3"><path d="M0 3h5L2.500 0z"/></svg></button></div>
          <i class="cell"></i><i class="cell"></i><i class="cell"></i>
          <svg class="resize" viewBox="0 0 13 13"><path stroke="#888" d="M1 13L13 1M5 13l8-8M9 13l4-4"/><path stroke="#fff" d="M0 13L13 0M4 13l9-9M8 13l5-5"/></svg>
        </footer>
      </main>
    </div>

    <footer class="taskbar">
      <button class="start"><svg><use href="#flag"/></svg>Start</button>
      <i class="divider"></i>
      <button class="task"><svg><use href="#dvdlab"/></svg>DVD-lab PRO * - [Men...</button>
      <div class="quick">
        <i class="divider"></i>
        <button aria-label="Mail"><svg><use href="#outlook"/></svg></button>
        <button aria-label="Internet"><svg><use href="#ie"/></svg></button>
        <button aria-label="Viewer"><svg><use href="#eye"/></svg></button>
        <button aria-label="Media player"><svg><use href="#wmp"/></svg></button>
        <button aria-label="Movie player"><svg><use href="#qt"/></svg></button>
        <button aria-label="Folders"><svg><use href="#folders"/></svg></button>
        <button aria-label="Notepad"><svg><use href="#notepad"/></svg></button>
        <button aria-label="Camera"><svg><use href="#camera"/></svg></button>
        <button aria-label="S"><svg><use href="#ess"/></svg></button>
        <button aria-label="Drive C"><svg><use href="#drive"/></svg></button>
        <button aria-label="Drive D"><svg><use href="#drive"/></svg></button>
        <button aria-label="Drive E"><svg><use href="#drive"/></svg></button>
        <button aria-label="Drive F"><svg><use href="#drive"/></svg></button>
      </div>
      <div class="tray">
        <svg viewBox="0 0 16 16"><path fill="#c0c8e8" d="M0 0h16v16H0z"/><path fill="#0a246a" d="M1 1h14v13H1z"/><path fill="none" stroke="#fff" stroke-width="2" d="M4 11V5h4v6M8 5h4v6"/></svg>
        <svg viewBox="0 0 16 16"><path fill="#0a246a" d="M0 0h16v16H0z"/><path fill="none" stroke="#f8f040" shape-rendering="auto" d="M4 2q-5 6 0 12M6 5q-2 3 0 6M12 2q5 6 0 12M10 5q2 3 0 6"/><path fill="#f8f040" d="M7 7h2v3H7z"/></svg>
        <time>15:56 PM</time>
      </div>
    </footer>
  </body>
</html>
```

FILE: styles.css
```
* { box-sizing: border-box; }
html, body { margin: 0; padding: 0; height: 100%; }
body { display: flex; flex-direction: column; overflow: hidden; background: #d4d0c8; color: #000; font: 11px/14px "DejaVu Sans Condensed", "DejaVu Sans", sans-serif; cursor: default; }
h1, h2, h3 { margin: 0; font-size: 11px; }
ul { margin: 0; padding: 0; list-style: none; }
i { display: block; flex: none; }
button { display: flex; flex: none; align-items: center; justify-content: center; margin: 0; padding: 0; border: 0; background: none; color: inherit; font: inherit; white-space: nowrap; }
svg { display: block; flex: none; width: 16px; height: 16px; shape-rendering: crispEdges; }
.sprite { position: absolute; width: 0; height: 0; }

/* window frames */
.desktop { display: flex; flex: 1; min-height: 0; }
.left { display: flex; flex-direction: column; width: calc(50% + 1px); background: linear-gradient(#d4d0c8 412px, #c07830 412px, #d09040 592px, #808080 592px); }
.top-row { display: flex; height: 412px; background: #d4d0c8; }
.win { display: flex; flex-direction: column; padding: 3px; border: 1px solid; border-color: #d4d0c8 #404040 #404040 #d4d0c8; background: #d4d0c8; box-shadow: inset 1px 1px #fff, inset -1px -1px #808080; }
.project { width: 190px; }
.compile { width: 262px; }
.preview { flex: 1; min-width: 0; padding-top: 2px; border-top: 0; box-shadow: inset 1px 0 #fff, inset -1px -1px #808080; }
.assets { flex: 1; min-height: 0; margin-right: 1px; border-bottom: 0; }
.main { flex: 1; min-width: 0; padding: 2px 3px 1px; border-top: 0; margin-bottom: 1px; box-shadow: inset 1px 0 #fff, inset -1px -1px #808080; }
.caption { display: flex; flex: none; align-items: center; height: 15px; padding: 0 2px 0 1px; background: #0a246a; color: #fff; }
.caption h2, .caption h1 { flex: 1; font-weight: bold; }
.close { width: 13px; height: 11px; border: 1px solid; border-color: #fff #404040 #404040 #fff; background: #d4d0c8; }
.close svg { width: 6px; height: 6px; }

/* toolbars */
.toolbar { display: flex; flex: none; align-items: center; height: 24px; margin-top: 2px; padding-left: 1px; background: #dbd8d1; }
.toolbar button { width: 23px; height: 22px; }
.toolbar .drop { width: 12px; }
.drop svg { width: 5px; height: 3px; }
.toolbar .on, .toolbox .on { border: 1px solid #0a246a; background: #d4d5da; }
.sep { width: 6px; height: 18px; background: linear-gradient(#a6a6a6, #a6a6a6) center / 1px 100% no-repeat; }
.grip { width: 3px; height: 20px; margin: 0 4px 0 3px; background: repeating-linear-gradient(#a6a6a6 0 1px, transparent 1px 2px); }
.blue { color: #4040c8; }
.blue svg, .dim svg { fill: currentColor; }
.dim { color: #888; }

/* project */
.tree { flex: 1; margin: 5px 4px 0 5px; border: 1px solid #808080; background: #fff; }
.tree li { display: flex; align-items: center; height: 16px; white-space: nowrap; }
.tree i, .toggle { width: 19px; height: 16px; background-repeat: no-repeat; }
.tree svg { margin-right: 3px; }
.tree span, .tree b { padding: 0 1px; }
.toggle { position: relative; background-image: repeating-linear-gradient(90deg, #808080 0 1px, transparent 1px 2px); background-size: 10px 1px; background-position: 9px 8px; }
.toggle::before { content: ""; width: 9px; height: 9px; border: 1px solid #808080; background: linear-gradient(#000, #000) center / 5px 1px no-repeat #fff; }
.bar { background-image: repeating-linear-gradient(#808080 0 1px, transparent 1px 2px); background-size: 1px 100%; background-position: 9px 0; }
.tee, .ell { background-image: repeating-linear-gradient(#808080 0 1px, transparent 1px 2px), repeating-linear-gradient(90deg, #808080 0 1px, transparent 1px 2px); background-size: 1px 100%, 10px 1px; background-position: 9px 0, 9px 8px; }
.ell { background-size: 1px 8px, 10px 1px; }
.tree .selected { height: 16px; outline: 1px dotted #000; outline-offset: -1px; background: #d4d0c8; }
.project-tabs { height: 21px; margin: 2px 2px 2px 3px; padding-left: 3px; border-top: 1px solid #000; background: #f5f1ea; }
.project-tabs button { gap: 5px; width: 68px; height: 19px; margin-top: -1px; padding-right: 4px; border: solid #000; border-width: 0 1px 1px 0; background: #d4d0c8; }

/* compile */
.log { display: flex; flex: 1; margin: 3px 3px 0 3px; }
.log-text { flex: 1; background: #fff; }
.vscroll, .track { background: repeating-conic-gradient(#fff 0 25%, #d4d0c8 0 50%) 0 0 / 2px 2px; }
.vscroll { display: flex; flex-direction: column; justify-content: space-between; width: 16px; }
.vscroll button, .hscroll button { width: 16px; height: 16px; border: 1px solid; border-color: #fff #404040 #404040 #fff; background: #d4d0c8; box-shadow: inset -1px -1px #808080; }
.vscroll svg { width: 7px; height: 4px; fill: #808080; }
.vscroll .up svg { transform: rotate(180deg); }
.progress { height: 10px; margin: 4px 3px 2px; border: 1px solid; border-color: #808080 #fff #fff #808080; }

/* preview */
.player { display: flex; flex: 1; flex-direction: column; margin: 2px 2px 1px; border: 1px solid #808080; }
.video { flex: 1; background: #000; }
.seek { display: flex; align-items: center; height: 28px; padding: 0 8px; }
.preview .clock { margin-left: 24px; }
input[type=range] { -webkit-appearance: none; appearance: none; flex: 1; min-width: 0; margin: 0; background: none; }
.seek input { height: 22px; }
.seek input::-webkit-slider-runnable-track { height: 4px; border: 1px solid; border-color: #808080 #fff #fff #808080; background: #404040; }
.seek input::-webkit-slider-thumb { -webkit-appearance: none; width: 11px; height: 21px; margin-top: -10px; border: 1px solid; border-color: #fff #404040 #404040 #fff; background: #d4d0c8; box-shadow: inset -1px -1px #808080; }

/* assets */
.files { display: flex; flex: 1; flex-direction: column; margin: 2px 2px; border: 1px solid #808080; background: #fff; }
.file-list { flex: 1; }
table { width: 100%; border-collapse: separate; border-spacing: 0; table-layout: fixed; }
th { height: 17px; padding: 0 0 0 4px; border: 1px solid; border-color: transparent #808080 #808080 #fff; background: #d4d0c8; font-weight: normal; text-align: left; }
.c200 { width: 200px; }
.c103 { width: 103px; }
.c100 { width: 100px; }
.c80 { width: 80px; }
.c60 { width: 60px; }
.sheets { display: flex; height: 16px; background: #d4d0c8; }
.nav { width: 15px; border: 1px solid; border-color: #fff #808080 #808080 #fff; }
.nav svg { width: 9px; height: 9px; fill: #808080; }
.sheet { box-shadow: inset 0 1px #808080; }
.sheet.active { gap: 7px; padding-right: 9px; background: #fff; box-shadow: none; font-weight: bold; }
.sheet.active svg { width: 8px; }
.slant { width: 12px; box-shadow: inset 0 1px #808080; shape-rendering: auto; }
.slant.first { width: 9px; }
.hscroll { display: flex; flex: 1; margin-left: 132px; padding-right: 16px; }
.splitter { width: 6px; border: 1px solid; border-color: #fff #808080 #808080 #fff; }
.track { flex: 1; }
.arrow { width: 4px; height: 7px; fill: #808080; }

/* main window */
.main .caption { height: 18px; padding: 0 2px 0 2px; }
.main .caption h1 { margin-left: 2px; }
.main .close { width: 16px; height: 14px; }
.main .close svg { width: 8px; height: 8px; }
.main .last { margin-left: 2px; }
.menubar { display: flex; flex: none; align-items: center; height: 26px; padding-top: 2px; }
.menubar button { padding: 0 6px 0 7px; }
.mdi { display: flex; margin-left: auto; padding-right: 7px; gap: 9px; }
.menubar .mdi button { padding: 0; }
.mdi svg { width: 8px; height: 8px; }
.main .toolbar { margin: 0; padding: 0; }
.standard { align-self: flex-start; }
.main .objects { height: 22px; padding-left: 23px; }
.gap { width: 6px; }
.route { display: flex; align-items: center; gap: 5px; height: 22px; width: 83px; background: #d4d0c8; }
.route input { -webkit-appearance: none; appearance: none; width: 13px; height: 13px; margin: 0; border: 1px solid; border-color: #404040 #fff #fff #404040; background: #fff; }
.route input:checked::before { content: ""; display: block; width: 9px; height: 9px; margin: 1px; background: #000; clip-path: polygon(10% 35%, 40% 62%, 95% 5%, 95% 40%, 40% 98%, 10% 68%); }

.work { display: flex; flex: 1; min-height: 0; }
.toolbox { width: 24px; border-right: 1px solid #fff; background: #dbd8d1; }
.toolbox button { width: 23px; height: 22px; }
.toolbox hr { height: 1px; margin: 2px 0 3px; border: 0; background: #a6a6a6; }
.letter { color: #444; font: italic bold 14px "Liberation Serif", serif; }
.editor { display: grid; flex: 1; min-width: 0; grid-template: 20px 1fr / 19px 1fr; border-top: 1px solid #fff; }

/* rulers: 10px minor steps, 50px major steps */
.ruler-h, .ruler-v { position: relative; overflow: hidden; font: 10px/12px "Liberation Sans", Arial, sans-serif; }
.ruler-h { grid-column: 1 / 3; padding: 0 10px 0 29px; }
.ruler-v { padding: 75px 0 77px; }
.ruler-range { height: 100%; background: #f5f1ea; }
.ruler-h .labels { position: absolute; display: flex; inset: 0 0 0 4px; background: repeating-linear-gradient(90deg, #000 0 1px, transparent 1px 50px) 25px 100% / 100% 6px no-repeat, repeating-linear-gradient(90deg, #000 0 1px, transparent 1px 10px) 25px 100% / 100% 3px no-repeat; }
.ruler-v .labels { position: absolute; display: flex; flex-direction: column; inset: 0; background: repeating-linear-gradient(transparent 0 25px, #000 25px 26px, transparent 26px 50px) 100% 0 / 6px 100% no-repeat, repeating-linear-gradient(transparent 0 5px, #000 5px 6px, transparent 6px 10px) 100% 0 / 3px 100% no-repeat; }
.ruler-h span { flex: none; width: 50px; padding-top: 2px; text-align: center; }
.ruler-v span { flex: none; height: 50px; width: 12px; margin-left: 1px; writing-mode: vertical-rl; transform: rotate(180deg); text-align: center; }
.ruler-v .neg { color: #888; }
.marker { position: absolute; background: #000; }
.ruler-h .marker { left: 393px; top: 0; width: 1px; height: 100%; }
.ruler-v .marker { bottom: 4px; left: 0; width: 100%; height: 1px; }
.stage { display: flex; padding: 74px 9px 76px 9px; border: 1px solid; border-color: #404040 #fff #fff #404040; background: #c0c0c0; }
.page { position: relative; flex: 1; background: #000; }
.safe { position: absolute; }
.safe::before { content: ""; position: absolute; inset: 0; background: repeating-linear-gradient(90deg, #909090 0 4px, transparent 4px 7px) 0 0 / 100% 1px no-repeat, repeating-linear-gradient(90deg, #909090 0 4px, transparent 4px 7px) 0 100% / 100% 1px no-repeat, repeating-linear-gradient(#909090 0 4px, transparent 4px 7px) 0 0 / 1px 100% no-repeat, repeating-linear-gradient(#909090 0 4px, transparent 4px 7px) 100% 0 / 1px 100% no-repeat; }
.action { inset: 5%; }
.title { inset: 10%; }

/* properties */
.properties { display: flex; flex-direction: column; width: 184px; padding: 5px 2px 6px 7px; }
.properties header { display: flex; align-items: center; height: 15px; padding: 0 6px 0 4px; border: 1px solid #808080; border-radius: 1px; }
.properties h2 { flex: 1; font-weight: normal; }
.pin { width: 7px; height: 4px; margin-right: 9px; fill: #808080; transform: rotate(180deg); }
.properties header button svg { width: 6px; height: 6px; }
.prop-body { display: flex; flex: 1; margin-top: 4px; }
.vtabs { width: 22px; margin-right: 2px; background: #f5f1ea; }
.vtabs button { flex-direction: column; justify-content: flex-start; width: 18px; height: 55px; margin-left: 2px; padding-top: 2px; border-bottom: 1px solid #808080; color: #444; }
.vtabs .active { width: 20px; height: 62px; padding-top: 4px; border-bottom-color: #000; background: #d4d0c8; color: #000; }
.vtabs .active + button { height: 49px; }
.vtabs span { flex: 1; writing-mode: vertical-rl; transform: rotate(180deg); text-align: center; }
.panel { flex: 1; margin: 2px 0 3px; padding: 5px 0 0 5px; border: 1px solid #808080; }
.panel h3 { width: 128px; height: 13px; background: #a0a0ff; color: #fff; font: 11px/13px "Liberation Sans", Arial, sans-serif; text-align: center; }
.combo { display: flex; align-items: center; width: 131px; height: 23px; margin-top: 5px; padding: 3px 6px 3px 3px; border: 1px solid; border-color: #fff #404040 #404040 #fff; box-shadow: inset -1px -1px #808080; }
.combo select { -webkit-appearance: none; appearance: none; flex: 1; width: 0; height: 15px; padding: 0; border: 1px solid #000; border-radius: 0; background: #fff; opacity: 1; }
.combo svg { width: 12px; height: 12px; margin-left: 4px; padding-left: 4px; border-left: 1px solid #808080; }
.combo.off { width: 99px; margin: 0; }
.off select { border-color: #808080; background: #d4d0c8; }
.off svg { fill: #808080; }
.panel .shadow-head { margin-top: 16px; }
.row { display: grid; grid-template-columns: 19px 99px; gap: 6px; align-items: center; margin-top: 6px; }
.row.shade { margin: 8px 0; }
.row.tight { margin-top: 4px; }
.panel .effects-head { margin-top: 14px; }
.panel .alpha-head { margin-top: 9px; }
.tile { height: 14px; border: 1px solid #808080; background: #fff; font: 9px/12px "DejaVu Sans Mono", monospace; }
.tile svg { height: 12px; }
.spin { display: flex; height: 15px; background: #c0c0c0; }
.spin.wide { width: 102px; }
.spin button { width: 15px; border: 1px solid; border-color: #fff #404040 #404040 #fff; background: #d4d0c8; box-shadow: inset -1px -1px #808080; }
.spin svg { width: 3px; height: 5px; }
.spin output { flex: 1; font: 10px/14px "Liberation Sans", Arial, sans-serif; text-align: center; }
.row input { width: 100px; height: 15px; border: 1px solid; border-color: #404040 #fff #fff #404040; background: linear-gradient(#000, #000) 50% 50% / 85px 1px no-repeat, repeating-linear-gradient(90deg, #b8c2d8 0 1px, #b0bcd4 1px 2px); }
.row input:disabled { padding-left: 3px; background: repeating-linear-gradient(90deg, #b8c2d8 0 1px, #b0bcd4 1px 2px); }
.row input::-webkit-slider-thumb { -webkit-appearance: none; width: 12px; height: 10px; border: 1px solid; border-color: #f5f1ea #0a246a #0a246a #f5f1ea; background: linear-gradient(#000, #000) center / 1px 100% no-repeat #f5f1ea; }
.row input:disabled::-webkit-slider-thumb { width: 4px; height: 8px; border: 0; background: #d4d0c8; }

/* document tabs and status */
.doc-tabs { display: flex; flex: none; height: 21px; padding-left: 5px; border-top: 1px solid #000; background: #f5f1ea; color: #444; }
.doc-tabs > button { gap: 12px; height: 19px; padding-right: 11px; }
.doc-tabs .divided { padding: 0 10px 0 5px; gap: 8px; background: linear-gradient(#808080, #808080) 0 50% / 1px 13px no-repeat; }
.doc-tabs > .active { gap: 6px; margin-top: -1px; padding: 0 9px 0 3px; border: solid; border-width: 0 1px 1px; border-color: #000 #000 #000 #fff; background: #d4d0c8; color: #000; font-weight: bold; }
.doc-nav { display: flex; gap: 8px; margin-left: auto; padding-right: 8px; }
.doc-nav svg { width: 5px; height: 9px; }
.doc-nav .cross { width: 8px; height: 8px; }
.status { display: flex; flex: none; align-items: center; gap: 3px; height: 19px; padding-left: 2px; }
.ready { flex: 1; }
.capacity { display: flex; height: 16px; border: 1px solid #808080; background: #c0c0c0; font: 10px/14px "Liberation Sans", Arial, sans-serif; }
.size { width: 80px; text-align: center; }
.media { width: 35px; background: #f5f1ea; text-align: center; }
.capacity button { width: 14px; background: #d4d0c8; }
.capacity svg { width: 5px; height: 3px; }
.cell { width: 27px; height: 16px; border: 1px solid #808080; }
.resize { width: 13px; height: 13px; margin: 0 1px 0 2px; }

/* taskbar */
.taskbar { display: flex; flex: none; align-items: center; height: 27px; padding: 0 2px; border-top: 1px solid #fff; }
.start, .task { height: 22px; border: 1px solid; font-weight: bold; }
.start { gap: 1px; width: 52px; border-color: #fff #404040 #404040 #fff; box-shadow: inset -1px -1px #808080; }
.divider { width: 3px; height: 18px; border: 1px solid; border-color: #fff #808080 #808080 #fff; }
.start + .divider { margin: 0 4px 0 7px; }
.task { justify-content: flex-start; gap: 5px; width: 160px; padding-left: 4px; border-color: #404040 #fff #fff #404040; background: repeating-conic-gradient(#fff 0 25%, #d4d0c8 0 50%) 0 0 / 2px 2px; }
.quick { display: flex; align-items: center; margin-left: auto; margin-right: 170px; }
.quick .divider { margin-right: 3px; }
.quick button { width: 23px; }
.tray { display: flex; align-items: center; gap: 3px; width: 98px; height: 22px; padding: 0 2px; border: 1px solid; border-color: #808080 #fff #fff #808080; }
.tray time { flex: 1; text-align: center; white-space: nowrap; }
```
